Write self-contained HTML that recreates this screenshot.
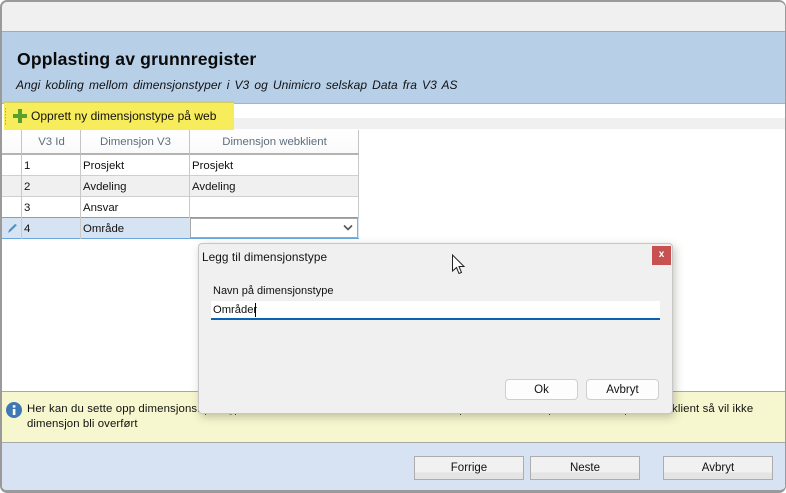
<!DOCTYPE html>
<html>
<head>
<meta charset="utf-8">
<style>
html,body{margin:0;padding:0;background:#fff}
body{width:786px;height:493px;overflow:hidden;position:relative;font-family:"Liberation Sans",sans-serif;font-size:11.4px;color:#111}
div{position:absolute;box-sizing:border-box;white-space:nowrap}
.t{line-height:14px}
.btn{background:linear-gradient(#f1f1f1 0,#f1f1f1 70%,#e4e4e4 70%,#e4e4e4 100%);border:1px solid #adadad;text-align:center;line-height:23px;height:24px;width:110px;top:456px;font-size:11.5px}
.db{background:#fdfdfd;border:1px solid #cfcfcf;border-radius:4px;text-align:center;line-height:20px;height:21px;width:73px;top:379px;font-size:11.5px}
.hl{top:130px;height:25px;background:linear-gradient(#fff,#fafafa);border-bottom:2px solid #b4b4b4;border-right:1px solid #c4c4c4;text-align:center;color:#5d6d7e;line-height:25px;padding-left:1px}
.c{line-height:22px;padding-left:3px;height:21px}
.d{width:1px;height:2px;top:413px;background:#333}
</style>
</head>
<body>
<div style="left:0;top:0;width:786px;height:493px;background:#fff;border:1px solid #9a9a9a;border-width:2px 1px 3px 2px;border-radius:7px;overflow:hidden"></div>
<div style="left:2px;top:2px;width:783px;height:29px;background:#f0f0f0;border-radius:6px 6px 0 0"></div>
<div style="left:2px;top:31px;width:783px;height:73px;background:#b7d0e8;border-top:1px solid #a9a9a9;border-bottom:1px solid #a9b4bf"></div>
<div class="t" style="left:17px;top:49px;font-size:17.6px;line-height:20px;font-weight:bold;color:#0a0a0a;letter-spacing:.14px">Opplasting av grunnregister</div>
<div class="t" style="left:16px;top:78px;font-size:12px;font-style:italic;word-spacing:1.6px;letter-spacing:.08px">Angi kobling mellom dimensjonstyper i V3 og Unimicro selskap Data fra V3 AS</div>

<div style="left:234px;top:118px;width:551px;height:11px;background:#f0f0f0"></div>
<div style="left:4px;top:101px;width:230px;height:29px;background:#f7ec5c"></div>
<div style="left:4px;top:101px;width:230px;height:2px;background:#d2cf5e"></div>
<div style="left:5px;top:108px;width:1px;height:17px;background-image:linear-gradient(#a8a880 50%,transparent 50%);background-size:1px 3px"></div>
<svg style="position:absolute;left:13px;top:109px" width="14" height="14" viewBox="0 0 14 14"><path d="M5 0h4v5h5v4H9v5H5V9H0V5h5z" fill="#5aa02c"/></svg>
<div class="t" style="left:31px;top:109px;font-size:12px;letter-spacing:.02px">Opprett ny dimensjonstype på web</div>

<!-- grid -->
<div class="hl" style="left:2px;width:20px"></div>
<div class="hl" style="left:22px;width:59px">V3 Id</div>
<div class="hl" style="left:81px;width:109px">Dimensjon V3</div>
<div class="hl" style="left:190px;width:169px">Dimensjon webklient</div>

<div style="left:2px;top:155px;width:357px;height:21px;background:#fff;border-bottom:1px solid #cfcfcf"></div>
<div style="left:2px;top:176px;width:357px;height:21px;background:#f0f0f0;border-bottom:1px solid #cfcfcf"></div>
<div style="left:2px;top:197px;width:357px;height:21px;background:#fff"></div>
<div style="left:2px;top:217px;width:357px;height:22px;background:#d5e3f2;border-top:1px solid #6aa5dc;border-bottom:1px solid #6aa5dc"></div>
<div style="left:21px;top:155px;width:1px;height:84px;background:#c9c9c9"></div>
<div style="left:80px;top:155px;width:1px;height:84px;background:#c9c9c9"></div>
<div style="left:189px;top:155px;width:1px;height:63px;background:#c9c9c9"></div>
<div style="left:358px;top:155px;width:1px;height:63px;background:#c9c9c9"></div>

<div class="c" style="left:21px;top:155px">1</div><div class="c" style="left:80px;top:155px">Prosjekt</div><div class="c" style="left:189px;top:155px">Prosjekt</div>
<div class="c" style="left:21px;top:176px">2</div><div class="c" style="left:80px;top:176px">Avdeling</div><div class="c" style="left:189px;top:176px">Avdeling</div>
<div class="c" style="left:21px;top:197px">3</div><div class="c" style="left:80px;top:197px">Ansvar</div>
<div class="c" style="left:21px;top:218px">4</div><div class="c" style="left:80px;top:218px">Område</div>
<svg style="position:absolute;left:7px;top:222px" width="11" height="12" viewBox="0 0 11 12"><path d="M1 11l1-3 6-6 2 1-6 6z" fill="#4d8fc4"/></svg>
<div style="left:190px;top:218px;width:168px;height:20px;background:#fff;border:1px solid #a8a8a8"></div>
<svg style="position:absolute;left:343px;top:224px" width="10" height="8" viewBox="0 0 10 8"><path d="M1 1.5l4 4 4-4" fill="none" stroke="#555" stroke-width="1.6"/></svg>

<!-- info bar -->
<div style="left:2px;top:391px;width:783px;height:52px;background:#f7f7cf;border-top:1px solid #a8a8a8;border-bottom:1px solid #a8a8a8"></div>
<svg style="position:absolute;left:6px;top:402px" width="16" height="16" viewBox="0 0 16 16"><circle cx="8" cy="8" r="8" fill="#3f78b5"/><rect x="6.8" y="7" width="2.6" height="6" fill="#fff"/><rect x="6.8" y="3.2" width="2.6" height="2.4" fill="#fff"/></svg>
<div class="t" style="left:27px;top:402px;letter-spacing:.12px">Her kan du sette opp dimensjonskobling</div>
<div class="t" style="left:672px;top:402px;letter-spacing:.12px">klient så vil ikke</div>
<div class="t" style="left:27px;top:417px;letter-spacing:.08px">dimensjon bli overført</div>

<!-- footer -->
<div style="left:2px;top:443px;width:783px;height:47px;background:#d7e3f3;border-radius:0 0 6px 6px"></div>
<div class="btn" style="left:414px">Forrige</div>
<div class="btn" style="left:530px">Neste</div>
<div class="btn" style="left:663px">Avbryt</div>

<!-- dialog -->
<div class="d" style="left:205px"></div><div class="d" style="left:235px"></div><div class="d" style="left:460px"></div><div class="d" style="left:549px"></div><div class="d" style="left:625px"></div>
<div style="left:198px;top:243px;width:475px;height:171px;background:#f0f0f0;border:1px solid #c6c6c6;border-radius:4px;box-shadow:2px 3px 9px rgba(90,90,70,.35)"></div>
<div class="t" style="left:202px;top:250px;font-size:11.8px;letter-spacing:.08px">Legg til dimensjonstype</div>
<div style="left:652px;top:246px;width:19px;height:19px;background:#c75050;color:#fff;font-size:10px;font-weight:bold;text-align:center;line-height:17px">x</div>
<div class="t" style="left:213px;top:284px;font-size:11px">Navn på dimensjonstype</div>
<div style="left:211px;top:301px;width:449px;height:19px;background:#fff;border-bottom:2px solid #0a62b5"></div>
<div class="t" style="left:213px;top:303px;font-size:11.2px">Områder</div>
<div style="left:255px;top:303px;width:1px;height:14px;background:#000"></div>
<div class="db" style="left:505px">Ok</div>
<div class="db" style="left:586px">Avbryt</div>

<!-- cursor -->
<svg style="position:absolute;left:451px;top:254px" width="15" height="22" viewBox="0 0 15 22"><path d="M1.5 1v16l4-3.5 2.5 6 2.5-1-2.5-6h5z" fill="#fff" stroke="#222" stroke-width="1"/></svg>
</body>
</html>
